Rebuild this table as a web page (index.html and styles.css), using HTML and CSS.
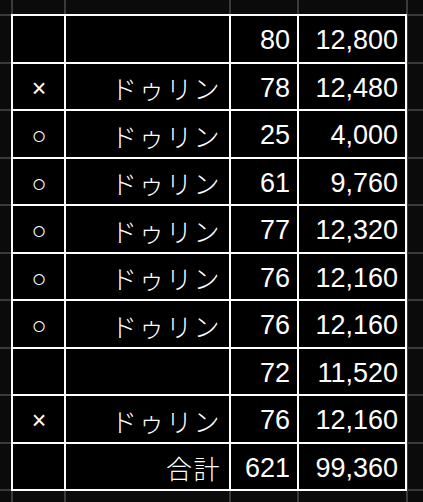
FILE: index.html
```html
<!DOCTYPE html>
<html lang="ja">
<head>
<meta charset="utf-8">
<title>集計表</title>
<link rel="stylesheet" href="styles.css">
</head>
<body>
<div class="sheet">
  <div class="table">
    <div class="cell mark"></div><div class="cell name"></div><div class="cell num">80</div><div class="cell num">12,800</div>
    <div class="cell mark">×</div><div class="cell name">ドゥリン</div><div class="cell num">78</div><div class="cell num">12,480</div>
    <div class="cell mark">○</div><div class="cell name">ドゥリン</div><div class="cell num">25</div><div class="cell num">4,000</div>
    <div class="cell mark">○</div><div class="cell name">ドゥリン</div><div class="cell num">61</div><div class="cell num">9,760</div>
    <div class="cell mark">○</div><div class="cell name">ドゥリン</div><div class="cell num">77</div><div class="cell num">12,320</div>
    <div class="cell mark">○</div><div class="cell name">ドゥリン</div><div class="cell num">76</div><div class="cell num">12,160</div>
    <div class="cell mark">○</div><div class="cell name">ドゥリン</div><div class="cell num">76</div><div class="cell num">12,160</div>
    <div class="cell mark"></div><div class="cell name"></div><div class="cell num">72</div><div class="cell num">11,520</div>
    <div class="cell mark">×</div><div class="cell name">ドゥリン</div><div class="cell num">76</div><div class="cell num">12,160</div>
    <div class="cell mark"></div><div class="cell name">合計</div><div class="cell num">621</div><div class="cell num">99,360</div>
  </div>
</div>
</body>
</html>
```
FILE: styles.css
```css
html, body {
  margin: 0;
  padding: 0;
}
body {
  width: 423px;
  height: 502px;
  overflow: hidden;
  background-color: #0b0b0b;
  background-image:
    linear-gradient(to right,
      transparent 11px, #3a3a3a 11px, #3a3a3a 13px, transparent 13px,
      transparent 64px, #3a3a3a 64px, #3a3a3a 66px, transparent 66px,
      transparent 229px, #3a3a3a 229px, #3a3a3a 231px, transparent 231px,
      transparent 297px, #3a3a3a 297px, #3a3a3a 299px, transparent 299px,
      transparent 406px, #3a3a3a 406px, #3a3a3a 408px, transparent 408px),
    linear-gradient(to bottom,
      transparent 14px, #3a3a3a 14px, #3a3a3a 16px, transparent 16px,
      transparent 62px, #3a3a3a 62px, #3a3a3a 64px, transparent 64px,
      transparent 109px, #3a3a3a 109px, #3a3a3a 111px, transparent 111px,
      transparent 157px, #3a3a3a 157px, #3a3a3a 159px, transparent 159px,
      transparent 204px, #3a3a3a 204px, #3a3a3a 206px, transparent 206px,
      transparent 252px, #3a3a3a 252px, #3a3a3a 254px, transparent 254px,
      transparent 299px, #3a3a3a 299px, #3a3a3a 301px, transparent 301px,
      transparent 347px, #3a3a3a 347px, #3a3a3a 349px, transparent 349px,
      transparent 394px, #3a3a3a 394px, #3a3a3a 396px, transparent 396px,
      transparent 442px, #3a3a3a 442px, #3a3a3a 444px, transparent 444px,
      transparent 489px, #3a3a3a 489px, #3a3a3a 491px, transparent 491px);
}
.sheet {
  padding: 14px 0 0 11px;
}
.table {
  display: inline-grid;
  grid-template-columns: 51px 163px 66px 106px;
  grid-template-rows: 46px 45px 46px 45px 46px 45px 46px 45px 46px 45px;
  gap: 2px;
  padding: 2px;
  background: #ffffff;
  font-family: "Liberation Sans", Arial, "Noto Sans CJK JP", sans-serif;
  color: #ffffff;
}
.cell {
  background: #000000;
  display: flex;
  align-items: center;
  line-height: 1;
  padding-top: 3px;
  box-sizing: border-box;
}
.mark {
  justify-content: center;
  font-size: 25px;
  padding-left: 1px;
}
.name {
  justify-content: flex-end;
  padding-right: 8px;
  font-family: "Noto Sans CJK JP", sans-serif;
  font-size: 26px;
  letter-spacing: 1.5px;
  font-weight: 300;
}
.num {
  justify-content: flex-end;
  padding-right: 7px;
  font-size: 27px;
}
```
